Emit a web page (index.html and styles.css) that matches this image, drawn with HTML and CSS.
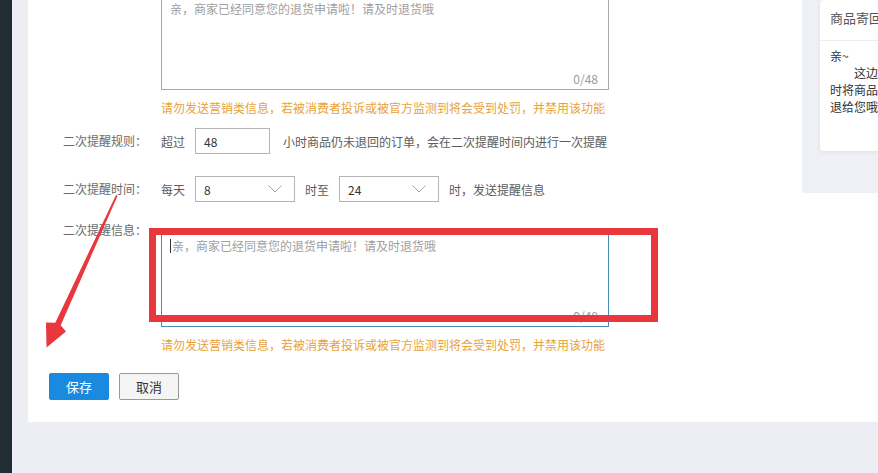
FILE: index.html
```html
<!DOCTYPE html>
<html lang="zh-CN">
<head>
	<meta charset="UTF-8">
	<meta name="viewport" content="width=device-width, initial-scale=1.0">
	<title>退货提醒设置</title>
	<link rel="stylesheet" href="styles.css">
</head>
<body>
	<div class="app">
		<div class="nav"></div>
		<div class="content">
			<div class="panel">
				<form class="form">
					<!-- 首次提醒信息 (scrolled up) -->
					<div class="row">
						<label class="label"></label>
						<div class="control">
							<div class="text-box">
								<textarea class="textarea" placeholder="亲，商家已经同意您的退货申请啦！请及时退货哦"></textarea>
								<span class="count">0/48</span>
							</div>
							<p class="tip">请勿发送营销类信息，若被消费者投诉或被官方监测到将会受到处罚，并禁用该功能</p>
						</div>
					</div>

					<div class="row row-rule">
						<label class="label">二次提醒规则：</label>
						<div class="control inline">
							<span>超过</span>
							<input class="input" type="text" value="48">
							<span class="after-input">小时商品仍未退回的订单，会在二次提醒时间内进行一次提醒</span>
						</div>
					</div>

					<div class="row row-time">
						<label class="label">二次提醒时间：</label>
						<div class="control inline">
							<span>每天</span>
							<div class="select">
								<span>8</span>
								<svg width="14" height="8" viewBox="0 0 14 8"><polyline points="0.5,0.5 7,7 13.5,0.5" fill="none" stroke="#a8a8a8" stroke-width="1"/></svg>
							</div>
							<span>时至</span>
							<div class="select">
								<span>24</span>
								<svg width="14" height="8" viewBox="0 0 14 8"><polyline points="0.5,0.5 7,7 13.5,0.5" fill="none" stroke="#a8a8a8" stroke-width="1"/></svg>
							</div>
							<span>时，发送提醒信息</span>
						</div>
					</div>

					<div class="row row-msg2">
						<label class="label">二次提醒信息：</label>
						<div class="control">
							<div class="text-box">
								<textarea class="textarea is-focus" placeholder="亲，商家已经同意您的退货申请啦！请及时退货哦"></textarea>
								<i class="caret"></i>
								<span class="count">0/48</span>
							</div>
							<p class="tip">请勿发送营销类信息，若被消费者投诉或被官方监测到将会受到处罚，并禁用该功能</p>
						</div>
					</div>

					<div class="actions">
						<button type="button" class="btn btn-primary">保存</button>
						<button type="button" class="btn">取消</button>
					</div>
				</form>

				<aside class="preview">
					<div class="preview-card">
						<div class="preview-title">商品寄回提醒</div>
						<div class="preview-body">
							亲~<br>
							<span class="indent">这边建议您尽快寄回商品，我们会及</span><br>
							时将商品退款给您，收到货后会将款项<br>
							退给您哦
						</div>
					</div>
				</aside>
			</div>
		</div>
	</div>

	<!-- screenshot annotations -->
	<div class="mark-box"></div>
	<svg class="mark-arrow" width="878" height="473" viewBox="0 0 878 473">
		<polygon points="116,195 117.6,195.8 60.7,325.2 66,331.5 46.5,347.5 46,322.5 55.3,322.8" fill="#e8373d"/>
	</svg>
</body>
</html>
```

FILE: styles.css
```css
*{
	box-sizing: border-box;
}
html,body{
	margin:0;
	height:100%;
}
body{
	background-color:#eceef3;
	font-family:"Noto Sans CJK SC","Microsoft YaHei",sans-serif;
	font-size:12px;
	color:#5c5c5c;
	overflow:hidden;
	position:relative;
}
.app{
	display:flex;
	height:100%;
}
.nav{
	width:12px;
	flex:none;
	background-color:#212d33;
}
.content{
	flex:1;
	padding-left:16px;
	min-width:0;
}
.panel{
	display:flex;
	align-items:flex-start;
	background-color:#fff;
	padding-left:21px;
	padding-bottom:22px;
}

/* form */
.form{
	width:753px;
	flex:none;
	margin:-4px 0 0;
}
.row{
	display:flex;
	align-items:flex-start;
}
.label{
	width:98px;
	flex:none;
	text-align:right;
	color:#6a6a6a;
	line-height:18px;
	white-space:nowrap;
}
.control{
	margin-left:14px;
}
.control.inline{
	display:flex;
	align-items:center;
	gap:10px;
	white-space:nowrap;
}
.row-rule{
	margin-top:11px;
}
.row-rule .label,.row-time .label{
	line-height:26px;
}
.row-time{
	margin-top:22px;
}
.row-msg2{
	margin-top:19px;
}
.row-msg2 .control{
	padding-top:12px;
}
.text-box{
	position:relative;
	width:448px;
}
.textarea{
	display:block;
	width:448px;
	height:94px;
	border:1px solid #a9a9a9;
	padding:4px 8px;
	resize:none;
	outline:none;
	font-family:inherit;
	font-size:12px;
	line-height:16px;
	color:#333;
}
.textarea::placeholder{
	color:#a0a0a0;
}
.textarea.is-focus{
	border-color:#4a8db4;
	padding-left:10px;
}
.caret{
	position:absolute;
	left:9px;
	top:6px;
	width:1px;
	height:14px;
	background-color:#333;
}
.count{
	position:absolute;
	right:11px;
	bottom:3px;
	color:#9c9c9c;
	line-height:16px;
}
.tip{
	margin:9px 0 0;
	line-height:18px;
	color:#e8a23a;
	white-space:nowrap;
}
.input{
	width:75px;
	height:26px;
	border:1px solid #b5b5b5;
	padding:0 8px;
	font-family:inherit;
	font-size:12px;
	color:#333;
	outline:none;
	margin-right:3px;
}
.select{
	width:100px;
	height:26px;
	border:1px solid #b5b5b5;
	padding:0 12px 0 8px;
	display:flex;
	align-items:center;
	justify-content:space-between;
	color:#333;
}
.actions{
	display:flex;
	gap:10px;
	margin-top:19px;
}
.btn{
	width:60px;
	height:27px;
	border:1px solid #999;
	border-radius:2px;
	background-color:#f5f5f5;
	color:#333;
	font-family:inherit;
	font-size:13px;
	padding:0;
}
.btn-primary{
	border-color:#1a8ae0;
	background-color:#1a8ae0;
	color:#fff;
}

/* preview column */
.preview{
	flex:1;
	min-width:0;
	height:193px;
	background-color:#eef0f5;
	padding-left:18px;
	overflow:hidden;
}
.preview-card{
	width:240px;
	background-color:#fff;
	border-radius:4px;
	box-shadow:0 1px 4px rgba(0,0,0,.07);
	padding:0 10px 36px;
}
.preview-title{
	padding:9px 0 13px 10px;
	margin:0 -10px;
	line-height:18px;
	font-size:13px;
	color:#555;
	border-bottom:1px solid #eee;
	white-space:nowrap;
}
.preview-body{
	padding-top:6px;
	line-height:17px;
	color:#333;
	white-space:nowrap;
}
.indent{
	padding-left:24px;
}

/* annotations over the screenshot */
.mark-box{
	position:absolute;
	left:149px;
	top:228px;
	width:509px;
	height:94px;
	border:7px solid #e8373d;
}
.mark-arrow{
	position:absolute;
	left:0;
	top:0;
	pointer-events:none;
}
```
